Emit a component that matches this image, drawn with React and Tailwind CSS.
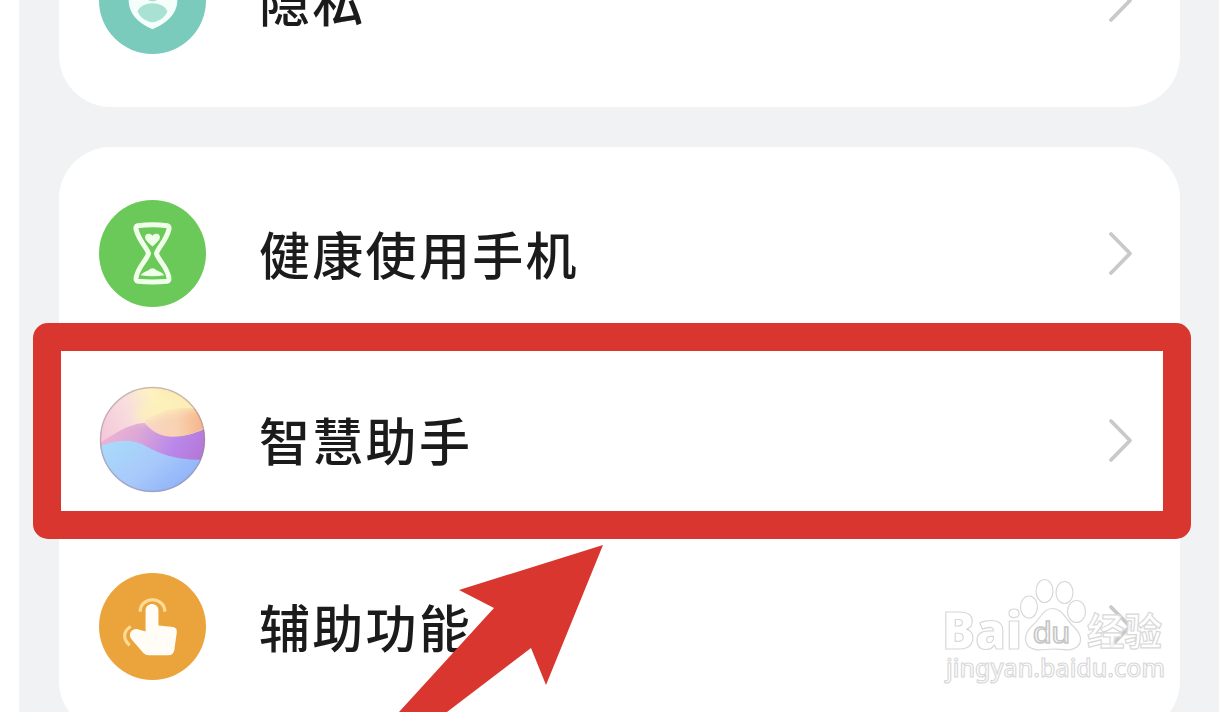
import { clsx } from 'clsx';

function Chevron() {
  return (
    <svg className="h-12 w-7 shrink-0" viewBox="0 0 28 48" fill="none" stroke="#c9c9c9" strokeWidth="3.800" strokeLinecap="round" strokeLinejoin="round">
      <path d="M4 5 L23 24.500 L4 44" />
    </svg>
  );
}

function ShieldIcon() {
  return (
    <svg className="size-full" viewBox="0 0 108 108">
      <path d="M54 22 L79 32 V56 C78 67 69 77 54 83 C39 77 31 67 30 56 V32 Z" fill="#f4fffc" />
      <circle cx="54" cy="47" r="8" fill="#a9e2d3" />
      <path d="M39 65 C43 54 65 54 69 65 C66 72 60 75 54 76 C48 75 42 72 39 65 Z" fill="#a9e2d3" />
    </svg>
  );
}

function HourglassIcon() {
  return (
    <svg className="size-full" viewBox="0 0 108 108" fill="none">
      <path
        d="M39 26 Q54 24 69 26 Q71.500 26.500 70.500 30 C67.500 42 60 47 58 54 C60 61 68.500 67 70.500 78 Q71 82 69 82 Q54 83.500 39 82 Q37 82 37.500 78 C39.500 67 48 61 50 54 C48 47 40.500 42 37.500 30 Q36.500 26.500 39 26 Z"
        stroke="#efffe9"
        strokeWidth="5"
        strokeLinejoin="round"
      />
      <path d="M54 47 C50 43 46.500 40.500 46.500 37.500 C46.500 33.500 51.500 33 54 36 C56.500 33 61.500 33.500 61.500 37.500 C61.500 40.500 58 43 54 47 Z" fill="#efffe9" />
      <path d="M42 76 C44 73.500 47 72.500 50 71 Q54 67 58 71 C61 72.500 64 73.500 66 76 Q54 78 42 76 Z" fill="#efffe9" />
    </svg>
  );
}

function AssistantIcon() {
  return (
    <svg className="size-full" viewBox="0 0 108 108">
      <defs>
        <clipPath id="orb">
          <circle cx="54" cy="54" r="53" />
        </clipPath>
        <filter id="glow" x="-30%" y="-30%" width="160%" height="160%">
          <feGaussianBlur stdDeviation="5" />
        </filter>
        <filter id="soft" x="-10%" y="-10%" width="120%" height="120%">
          <feGaussianBlur stdDeviation="0.8" />
        </filter>
        <linearGradient id="sky" x1="0" y1="0.550" x2="0.900" y2="0.1">
          <stop offset="0" stopColor="#f3c4d8" />
          <stop offset="0.400" stopColor="#f8dede" />
          <stop offset="0.650" stopColor="#fdf3c0" />
          <stop offset="1" stopColor="#fce2a6" />
        </linearGradient>
        <linearGradient id="sun" x1="0" y1="0.3" x2="1" y2="0.3">
          <stop offset="0" stopColor="#f9d5c8" />
          <stop offset="0.500" stopColor="#f8d2b0" />
          <stop offset="1" stopColor="#f3ad80" />
        </linearGradient>
        <linearGradient id="violet" x1="0" y1="0.3" x2="1" y2="0.500">
          <stop offset="0" stopColor="#f0b6d2" />
          <stop offset="0.350" stopColor="#dda8d6" />
          <stop offset="0.700" stopColor="#b988ea" />
          <stop offset="1" stopColor="#b476d6" />
        </linearGradient>
        <linearGradient id="sea" x1="0" y1="0.1" x2="1" y2="0.700">
          <stop offset="0" stopColor="#a9dcf9" />
          <stop offset="0.500" stopColor="#a8c9fb" />
          <stop offset="1" stopColor="#86acf8" />
        </linearGradient>
      </defs>
      <g clipPath="url(#orb)">
        <rect width="108" height="108" fill="url(#sky)" />
        <g filter="url(#soft)">
          <path d="M-4 60 C14 50 26 39 46 37 C59 53 86 56 112 40 V80 L-4 78 Z" fill="url(#violet)" />
          <path d="M46 35 C52 47 64 52 78 51 C92 50 102 46 112 38 V26 C84 18 62 24 46 35 Z" fill="url(#sun)" />
        </g>
        <path d="M34 32 C52 12 84 6 112 16 V22 C84 22 66 26 50 35 Z" fill="#fdf0ba" filter="url(#glow)" />
        <path d="M-4 64 C12 54 34 52 48 61 C64 70 82 76 112 74 V112 H-4 Z" fill="url(#sea)" filter="url(#soft)" />
      </g>
      <circle cx="54" cy="54" r="52.500" fill="none" stroke="#99869a" strokeOpacity="0.500" strokeWidth="1.500" />
    </svg>
  );
}

function TouchIcon() {
  return (
    <svg className="size-full" viewBox="0 0 108 108" fill="none">
      <path d="M41.500 39 C42 23 66 23 66.500 39" stroke="#ffdc96" strokeWidth="3.200" />
      <path d="M32 54 C24 59 24 67 31 73" stroke="#ffdc96" strokeWidth="3.200" />
      <path
        d="M47 38 C47 29 60 29 60 38 V53 L75 54.500 Q79 55.500 78.500 60 L76 78 Q75 83 70 83 H50 Q47 83 45 81 L33 67 C28 61 34 55 40 57 L47 59 Z"
        fill="#fffdf6"
      />
    </svg>
  );
}

function SettingsRow({ label, color, icon: Icon }) {
  return (
    <div className="flex h-[186.500px] items-center pr-[45px] pl-10">
      <div className={clsx('size-[107px] shrink-0 overflow-hidden rounded-full', color)}>
        <Icon />
      </div>
      <span className="ml-[53px] flex-1 pt-2 text-[51px] leading-none font-medium tracking-[2.300px] whitespace-nowrap text-[#1b1b1b]">
        {label}
      </span>
      <Chevron />
    </div>
  );
}

function Watermark() {
  return (
    <svg className="absolute top-[570px] left-[935px] h-[125px] w-[240px]" viewBox="935 570 240 125" fill="#fff" stroke="#d8d8d8" strokeWidth="1.200">
      <ellipse cx="1029" cy="607" rx="8.500" ry="11" />
      <ellipse cx="1044.500" cy="591" rx="8.500" ry="11.500" />
      <ellipse cx="1064.500" cy="592.500" rx="8.500" ry="11" />
      <ellipse cx="1076.500" cy="611.500" rx="9" ry="11" />
      <path d="M1052.500 608.500 C1062 608.500 1065 618 1072 625 C1080 632 1084 641 1077 647 C1070 652 1062 649 1053 649 C1044 649 1037 652 1029 647 C1023 641 1025 632 1033 625 C1041 618 1043 608.500 1052.500 608.500 Z" />
      <text x="942" y="648.500" fontSize="51" fontWeight="800" textLength="80" lengthAdjust="spacingAndGlyphs" className="font-['Open_Sans',sans-serif]">Bai</text>
      <text x="1033" y="643" fontSize="30" textLength="37" lengthAdjust="spacingAndGlyphs" stroke="#c6c6c6" strokeWidth="1.500" className="font-['Liberation_Sans',sans-serif]">du</text>
      <text x="1087" y="645" fontSize="38" fontWeight="700" fillOpacity="0.800" textLength="75" lengthAdjust="spacingAndGlyphs">经验</text>
      <text x="946" y="677" fontSize="26" fontWeight="500" textLength="219" lengthAdjust="spacingAndGlyphs" className="font-['Noto_Sans',sans-serif]">jingyan.baidu.com</text>
    </svg>
  );
}

export default function App() {
  return (
    <div className="relative h-[712px] w-[1232px] overflow-hidden bg-white pr-[13px] pl-[19px] font-['Liberation_Sans','Noto_Sans_CJK_SC',sans-serif]">
      <main className="flex h-full flex-col gap-10 overflow-hidden bg-[#f1f2f4] pr-[39px] pl-10">
        <section className="-mt-[93px] shrink-0 rounded-b-[52px] bg-white pb-[13.500px]">
          <SettingsRow label="隐私" color="bg-[#7acbbb]" icon={ShieldIcon} />
        </section>
        <section className="shrink-0 rounded-[52px] bg-white py-[13px]">
          <SettingsRow label="健康使用手机" color="bg-[#6ac958]" icon={HourglassIcon} />
          <SettingsRow label="智慧助手" color="bg-white" icon={AssistantIcon} />
          <SettingsRow label="辅助功能" color="bg-[#eba43c]" icon={TouchIcon} />
        </section>
      </main>

      {/* Highlight box and pointer over the assistant row */}
      <div className="absolute top-[323px] left-[33px] h-[216px] w-[1158px] rounded-[15px] bg-[#d93630] [clip-path:polygon(evenodd,0_0,100%_0,100%_100%,0_100%,0_0,28px_28px,1130px_28px,1130px_188px,28px_188px,28px_28px)]" />
      <svg className="absolute top-[540px] left-[390px] h-[172px] w-[220px]" viewBox="390 540 220 172">
        <path d="M603 545 L459 590 L494 608 L399 712 H447 L531 648 L546 685 Z" fill="#d93630" />
      </svg>
      <Watermark />
    </div>
  );
}
